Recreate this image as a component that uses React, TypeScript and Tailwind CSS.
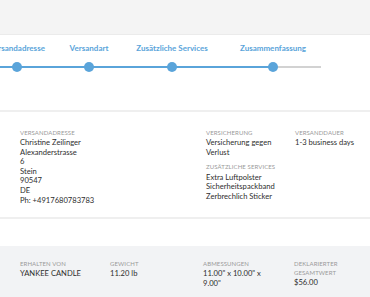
import React from "react";

const steps = [
  { label: "Versandadresse", ml: "ml-[17px]" },
  { label: "Versandart", ml: "ml-[72px]" },
  { label: "Zusätzliche Services", ml: "ml-[83px]" },
  { label: "Zusammenfassung", ml: "ml-[101px]" },
];

function Label({ children }: { children: React.ReactNode }) {
  return (
    <div className="text-[6px] leading-[9px] uppercase text-[#9a9a9a] tracking-[0.1px]">
      {children}
    </div>
  );
}

function Body({ children }: { children: React.ReactNode }) {
  return <div className="text-[7.6px] leading-[9.6px] text-[#2e2e2e] mt-[1.5px]">{children}</div>;
}

export default function App() {
  return (
    <div className="w-[370px] h-[297px] overflow-hidden bg-white font-['Lato',sans-serif] flex flex-col">
      <div className="h-[35px] shrink-0 bg-[#f4f4f4] border-b border-[#ebebeb]" />

      <div className="relative h-[75px] shrink-0 pt-[8px]">
        <div className="absolute left-0 top-[31px] flex">
          <div className="w-[273px] h-[2px] bg-[#5aa4da]" />
          <div className="w-[48px] h-[2px] bg-[#d2d2d2]" />
        </div>
        <div className="relative flex">
          {steps.map((s) => (
            <div key={s.label} className={`${s.ml} w-0 flex flex-col items-center`}>
              <div className="whitespace-nowrap text-[8px] leading-[10px] font-bold text-[#5aa4da]">
                {s.label}
              </div>
              <div className="mt-[9px] w-[10px] h-[10px] shrink-0 rounded-full bg-[#5aa4da]" />
            </div>
          ))}
        </div>
      </div>

      <div className="border-t-2 border-[#efefef] h-[107px] shrink-0 pt-[15.5px] pl-[20px] grid grid-cols-[186px_89px_1fr]">
        <div>
          <Label>Versandadresse</Label>
          <Body>
            <div>Christine Zeilinger</div>
            <div>Alexanderstrasse</div>
            <div>6</div>
            <div>Stein</div>
            <div>90547</div>
            <div>DE</div>
            <div>Ph: +4917680783783</div>
          </Body>
        </div>
        <div className="max-w-[72px]">
          <Label>Versicherung</Label>
          <Body>Versicherung gegen Verlust</Body>
          <div className="mt-[5px]">
            <Label>Zusätzliche Services</Label>
            <Body>
              <div>Extra Luftpolster</div>
              <div>Sicherheitspackband</div>
              <div>Zerbrechlich Sticker</div>
            </Body>
          </div>
        </div>
        <div>
          <Label>Versanddauer</Label>
          <Body>1-3 business days</Body>
        </div>
      </div>

      <div className="border-t-2 border-[#efefef] h-[29px] shrink-0" />

      <div className="flex-1 bg-[#f2f3f5] pt-[12.5px] pl-[20px] grid grid-cols-[90px_93px_91px_1fr] content-start">
        <div>
          <Label>Erhalten von</Label>
          <Body>YANKEE CANDLE</Body>
        </div>
        <div>
          <Label>Gewicht</Label>
          <Body>11.20 lb</Body>
        </div>
        <div className="max-w-[64px]">
          <Label>Abmessungen</Label>
          <Body>11.00" x 10.00" x 9.00"</Body>
        </div>
        <div className="max-w-[60px]">
          <Label>Deklarierter Gesamtwert</Label>
          <Body>$56.00</Body>
        </div>
      </div>
    </div>
  );
}
